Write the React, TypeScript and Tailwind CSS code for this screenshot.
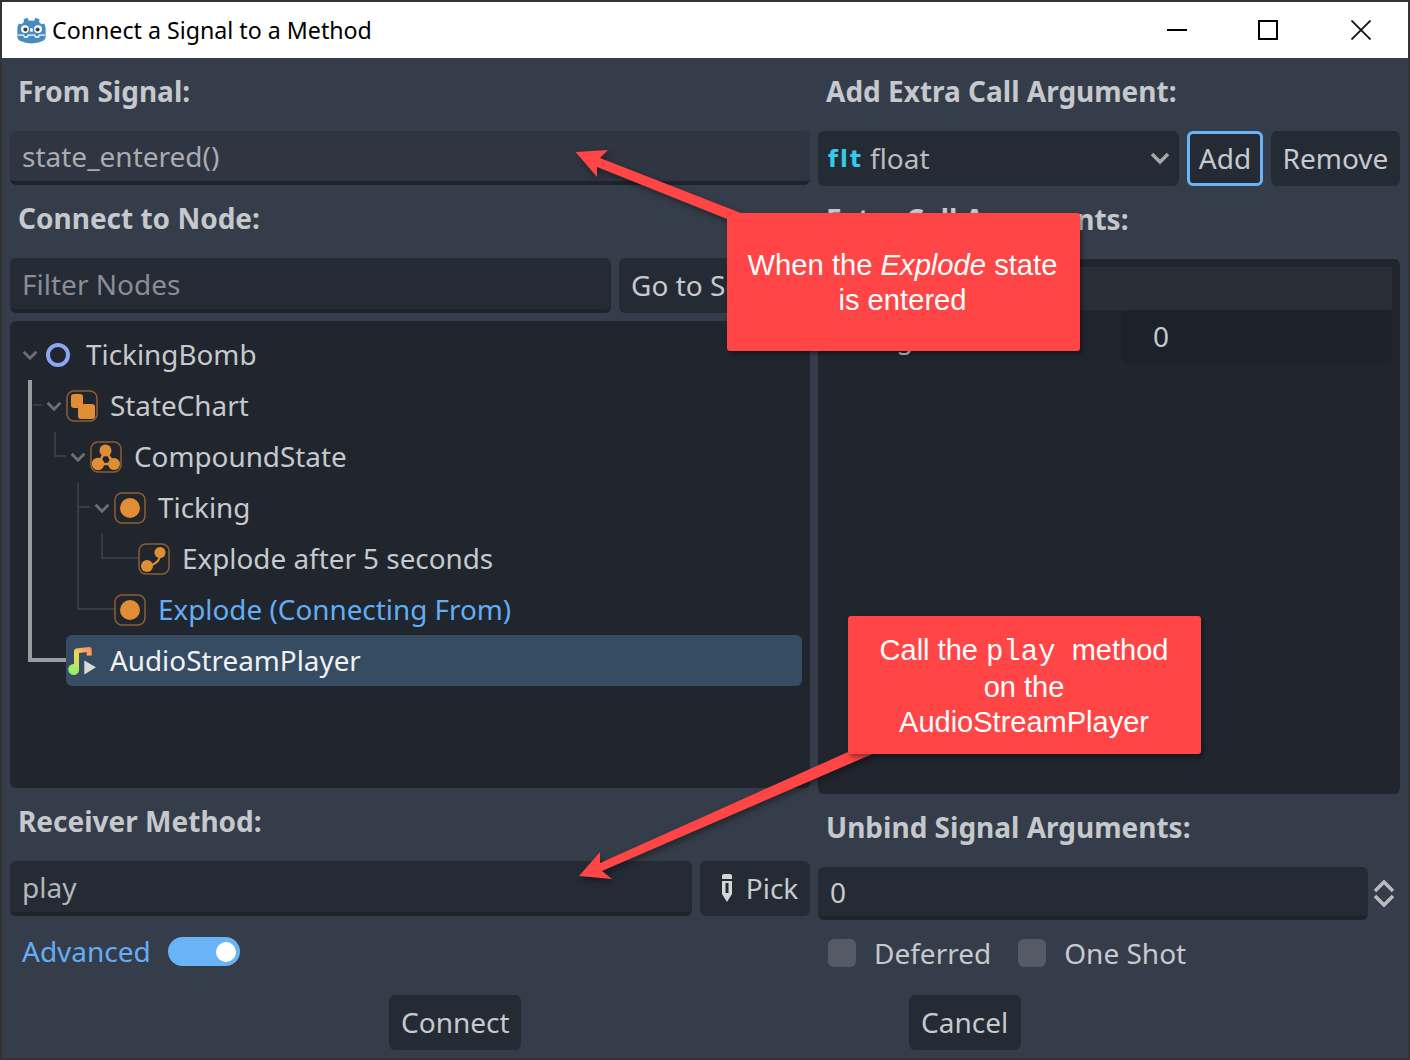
import type { ReactNode } from "react";

function GodotLogo() {
    return (
        <svg width="29" height="28" viewBox="0 0 31 29">
            <path
                d="M11.5 1.5 L12.5 4.6 Q15.5 4 18.5 4.6 L19.5 1.5 Q22 2 24 3.2 L23.6 6 Q25 7 26 8.4 L29 7.6 Q30.4 10 30.6 12.5 L30.6 22 Q30.6 24.5 28 26 Q22 28.8 15.5 28.8 Q9 28.8 3 26 Q0.4 24.5 0.4 22 L0.4 12.5 Q0.6 10 2 7.6 L5 8.4 Q6 7 7.4 6 L7 3.2 Q9 2 11.5 1.5 Z"
                fill="#478cbf"
            />
            <circle cx="8.5" cy="13.5" r="4.2" fill="#fff" />
            <circle cx="22.5" cy="13.5" r="4.2" fill="#fff" />
            <circle cx="9" cy="14" r="2.2" fill="#414042" />
            <circle cx="22" cy="14" r="2.2" fill="#414042" />
            <rect x="14" y="12.5" width="3" height="4" rx="1.2" fill="#fff" />
            <path d="M1 20 H7 L8 22 H11 L12 20 H19 L20 22 H23 L24 20 H30" stroke="#fff" strokeWidth="1.4" fill="none" />
        </svg>
    );
}

function StateBox({ children }: { children: ReactNode }) {
    return (
        <svg width="32" height="32" viewBox="0 0 32 32">
            <rect x="1" y="1" width="30" height="30" rx="7" fill="none" stroke="#8a5f33" strokeWidth="1.5" />
            {children}
        </svg>
    );
}

function RootIcon() {
    return (
        <svg width="32" height="32" viewBox="0 0 32 32">
            <circle cx="16" cy="16" r="10" fill="none" stroke="#8da5f3" strokeWidth="4" />
        </svg>
    );
}

function ChartIcon() {
    return (
        <StateBox>
            <rect x="5" y="4" width="12" height="14" rx="3" fill="#e08e35" />
            <rect x="12" y="14" width="17" height="15" rx="3" fill="#e08e35" />
        </StateBox>
    );
}

function CompoundIcon() {
    return (
        <StateBox>
            <path d="M15.5 10 L8 23 H24 Z" fill="none" stroke="#e08e35" strokeWidth="2.5" />
            <circle cx="15.5" cy="9.5" r="6" fill="#e08e35" />
            <circle cx="8" cy="23" r="6.2" fill="#e08e35" />
            <circle cx="24" cy="23" r="6" fill="#e08e35" />
            <path d="M13 17.5 H18.5 L15.7 21.5 Z" fill="#21252e" />
        </StateBox>
    );
}

function AtomicIcon() {
    return (
        <StateBox>
            <circle cx="16" cy="16" r="10" fill="#e08e35" />
        </StateBox>
    );
}

function TransitionIcon() {
    return (
        <StateBox>
            <path d="M22 10 Q23 20 10 23" fill="none" stroke="#e08e35" strokeWidth="2" />
            <circle cx="22" cy="9.5" r="5.5" fill="#e08e35" />
            <circle cx="9" cy="23" r="6" fill="#e08e35" />
        </StateBox>
    );
}

function AudioIcon() {
    return (
        <svg width="32" height="40" viewBox="0 0 32 40">
            <defs>
                <linearGradient id="note" gradientUnits="userSpaceOnUse" x1="4" y1="30" x2="25" y2="6">
                    <stop offset="0" stopColor="#8ef06a" />
                    <stop offset="0.55" stopColor="#f5d45f" />
                    <stop offset="1" stopColor="#ff8060" />
                </linearGradient>
            </defs>
            <path
                d="M8 10 Q8 8 10 7.5 L23 6 Q25.7 5.8 25.7 8 V14.5 H20.7 V11 L13 12 V27 A5.5 5.5 0 1 1 8 23 Z"
                fill="url(#note)"
            />
            <path d="M18.3 19.5 L30 26.2 L18.3 33.5 Z" fill="#d9d9d9" />
        </svg>
    );
}

function Chevron({ className }: { className: string }) {
    return (
        <svg width="20" height="14" viewBox="0 0 20 14" className={className}>
            <path d="M2 3 L10 11 L18 3" fill="none" stroke="currentColor" strokeWidth="3.5" />
        </svg>
    );
}

const treeRows = [
    { label: "TickingBomb", offset: "ml-[12px]", icon: <RootIcon />, chevron: true, tone: "text-[#c6c9cd]" },
    { label: "StateChart", offset: "ml-[36px]", icon: <ChartIcon />, chevron: true, tone: "text-[#c6c9cd]" },
    { label: "CompoundState", offset: "ml-[60px]", icon: <CompoundIcon />, chevron: true, tone: "text-[#c6c9cd]" },
    { label: "Ticking", offset: "ml-[84px]", icon: <AtomicIcon />, chevron: true, tone: "text-[#c6c9cd]" },
    { label: "Explode after 5 seconds", offset: "ml-[108px]", icon: <TransitionIcon />, chevron: false, tone: "text-[#c6c9cd]" },
    { label: "Explode (Connecting From)", offset: "ml-[84px]", icon: <AtomicIcon />, chevron: false, tone: "text-[#63aef2]" },
    { label: "AudioStreamPlayer", offset: "ml-[36px]", icon: <AudioIcon />, chevron: false, tone: "text-[#f0f2f4]", selected: true },
];

function Label({ children }: { children: ReactNode }) {
    return <div className="h-[73px] pl-[8px] text-[28px] leading-[66px] font-bold text-[#c5c8cd]">{children}</div>;
}

function Field({ children, className }: { children: ReactNode; className: string }) {
    return (
        <div className={`flex items-center rounded-md border-b-4 border-[#1f232b] pl-3 text-[28px] ${className}`}>
            {children}
        </div>
    );
}

function Btn({ children, className }: { children: ReactNode; className: string }) {
    return (
        <div className={`flex items-center justify-center rounded-md bg-[#252b34] pb-[2px] text-[28px] text-[#c6c9cd] ${className}`}>
            {children}
        </div>
    );
}

function Tree() {
    return (
        <div className="relative mt-2 h-[467px] rounded-md bg-[#21252e] pt-[8px] pr-2">
            <svg className="absolute top-0 left-0" width="800" height="467" viewBox="0 0 800 467">
                <path d="M20 59 V339 H56" fill="none" stroke="#9a9b9e" strokeWidth="4" />
                <path
                    d="M23 84 H32 M45 111 V135 H56 M68 162 V288 H105 M68 186 H80 M92 213 V237 H128"
                    fill="none"
                    stroke="#373c47"
                    strokeWidth="2"
                />
            </svg>
            {treeRows.map((row) => (
                <div key={row.label} className={`relative flex h-[51px] items-center ${row.offset}`}>
                    <div className="flex w-[20px] justify-start">
                        {row.chevron && <Chevron className="w-[16px] shrink-0 text-[#6b6f76]" />}
                    </div>
                    <div
                        className={`flex h-full flex-1 items-center gap-3 rounded-md text-[27.85px] ${row.tone} ${
                            row.selected ? "bg-[#364c63]" : ""
                        }`}
                    >
                        <span className="flex w-[32px] justify-center">{row.icon}</span>
                        <span>{row.label}</span>
                    </div>
                </div>
            ))}
        </div>
    );
}

function LeftColumn() {
    return (
        <div className="w-[800px] shrink-0">
            <Label>From Signal:</Label>
            <Field className="h-[54px] bg-[#2f3541] text-[#a9abb0]">state_entered()</Field>
            <Label>Connect to Node:</Label>
            <div className="flex h-[55px] gap-2">
                <Field className="w-[601px] bg-[#252b34] text-[#8a8d93]">Filter Nodes</Field>
                <Btn className="flex-1 pl-[2px]">Go to Source</Btn>
            </div>
            <Tree />
            <Label>Receiver Method:</Label>
            <div className="flex h-[55px] gap-2">
                <Field className="w-[682px] bg-[#252b34] text-[#b4b6ba]">play</Field>
                <Btn className="flex-1 gap-[14px] pl-[10px]">
                    <svg width="10" height="28" viewBox="0 0 10 28">
                        <path
                            d="M2 0 H8 Q10 0 10 2 V20 L5 28 L0 20 V2 Q0 0 2 0 Z M0 5 V7 H10 V5 Z M3.5 9 V19 H6.5 V9 Z"
                            fill="#d4d5d7"
                            fillRule="evenodd"
                        />
                    </svg>
                    Pick
                </Btn>
            </div>
            <div className="mt-[21px] flex h-[29px] items-center gap-[17px] pl-3 text-[28px] text-[#63aef2]">
                <span className="pb-[2px]">Advanced</span>
                <span className="flex h-[29px] w-[72px] items-center justify-end rounded-full bg-[#69b4f6] pr-[4px]">
                    <span className="h-[20px] w-[20px] rounded-full bg-white" />
                </span>
            </div>
        </div>
    );
}

function RightColumn() {
    return (
        <div className="flex-1">
            <Label>Add Extra Call Argument:</Label>
            <div className="flex h-[55px] gap-2">
                <div className="flex flex-1 items-center rounded-md bg-[#252b34] pr-[9px] pb-[2px] pl-[10px] text-[28px] text-[#b9bbbf]">
                    <span className="mr-[6px] w-[36px] pt-[3px] font-['DejaVu_Sans',sans-serif] text-[23px] leading-none font-bold tracking-[2px] text-[#36c9ee]">
                        flt
                    </span>
                    float
                    <Chevron className="ml-auto text-[#a4a6aa]" />
                </div>
                <Btn className="w-[76px] border-[3px] border-[#69b4f6]">Add</Btn>
                <Btn className="w-[129px]">Remove</Btn>
            </div>
            <Label>Extra Call Arguments:</Label>
            <div className="h-[535px] rounded-md bg-[#21252e] p-2">
                <div className="h-[43px] bg-[#2a2e37]" />
                <div className="flex h-[53px] items-center">
                    <span className="w-[295px] pl-[41px] text-[28px] text-[#c6c9cd]">Arg 0</span>
                    <div className="flex h-full flex-1 items-center rounded-md bg-[#1d2129] pb-[2px] pl-[32px] text-[28px] text-[#c6c9cd]">
                        0
                    </div>
                </div>
            </div>
            <Label>Unbind Signal Arguments:</Label>
            <div className="flex h-[53px] items-center">
                <Field className="h-full w-[550px] bg-[#252b34] text-[#c6c9cd]">0</Field>
                <svg className="mb-[2px] ml-[5px]" width="22" height="28" viewBox="0 0 22 28">
                    <path d="M2 12 L11 3 L20 12 M2 17 L11 26 L20 17" fill="none" stroke="#b9bbbf" strokeWidth="3.5" />
                </svg>
            </div>
            <div className="mt-[19px] flex h-[28px] items-center pl-[10px] text-[28px] text-[#c6c9cd]">
                <span className="mr-[18px] h-[28px] w-[28px] rounded-md bg-[#545b66]" />
                <span>Deferred</span>
                <span className="mr-[18px] ml-[27px] h-[28px] w-[28px] rounded-md bg-[#545b66]" />
                <span>One Shot</span>
            </div>
        </div>
    );
}

function Arrows() {
    return (
        <svg
            className="pointer-events-none absolute -top-[2px] -left-[2px] drop-shadow-[2px_3px_3px_rgba(0,0,0,0.4)]"
            width="1410"
            height="1060"
            viewBox="0 0 1410 1060"
        >
            <path d="M575.5 152 L608 150 L600 158 L741 213 L727 219 L597 167 L597 177 Z" fill="#ff4545" />
            <path d="M579 876 L600 852 L600 863 L848 752 L877 752 L602 871 L612 879 Z" fill="#ff4545" />
        </svg>
    );
}

export default function App() {
    return (
        <div className="relative h-[1060px] w-[1410px] overflow-hidden border-2 border-[#333] bg-[#363d4a] font-['Noto_Sans',sans-serif]">
            <div className="flex h-[56px] items-center bg-white pl-[15px] text-[23.2px] text-black">
                <GodotLogo />
                <span className="ml-[6px]">Connect a Signal to a Method</span>
                <div className="mr-[1px] ml-auto flex">
                    <div className="flex h-[54px] w-[88px] items-center justify-center">
                        <span className="h-[2px] w-[20px] bg-black" />
                    </div>
                    <div className="flex h-[54px] w-[94px] items-center justify-center">
                        <span className="h-[20px] w-[20px] border-2 border-black" />
                    </div>
                    <div className="flex h-[54px] w-[92px] items-center justify-center">
                        <svg width="20" height="20" viewBox="0 0 20 20">
                            <path d="M0.5 0.5 L19.5 19.5 M19.5 0.5 L0.5 19.5" stroke="#111" strokeWidth="1.8" />
                        </svg>
                    </div>
                </div>
            </div>
            <div className="flex h-[937px] gap-2 px-2">
                <LeftColumn />
                <RightColumn />
            </div>
            <div className="flex h-[55px] justify-evenly">
                <Btn className="w-[132px]">Connect</Btn>
                <Btn className="w-[112px]">Cancel</Btn>
            </div>
            <Arrows />
            <div className="absolute top-[211px] left-[725px] flex h-[138px] w-[353px] flex-col items-center justify-center rounded-[3px] bg-[#ff4545] pt-[2px] pr-[2px] font-['Liberation_Sans',sans-serif] text-[29.2px] leading-[35px] text-white shadow-[2px_3px_5px_rgba(0,0,0,0.4)]">
                <p>
                    When the <em>Explode</em> state
                </p>
                <p>is entered</p>
            </div>
            <div className="absolute top-[614px] left-[846px] flex h-[138px] w-[353px] flex-col items-center justify-center rounded-[3px] bg-[#ff4545] pt-[3px] pr-[1px] font-['Liberation_Sans',sans-serif] text-[29px] leading-[35px] text-white shadow-[2px_3px_5px_rgba(0,0,0,0.4)]">
                <p>
                    Call the <span className="font-['Liberation_Mono',monospace]">play</span>&nbsp; method
                </p>
                <p>on the</p>
                <p>AudioStreamPlayer</p>
            </div>
        </div>
    );
}
